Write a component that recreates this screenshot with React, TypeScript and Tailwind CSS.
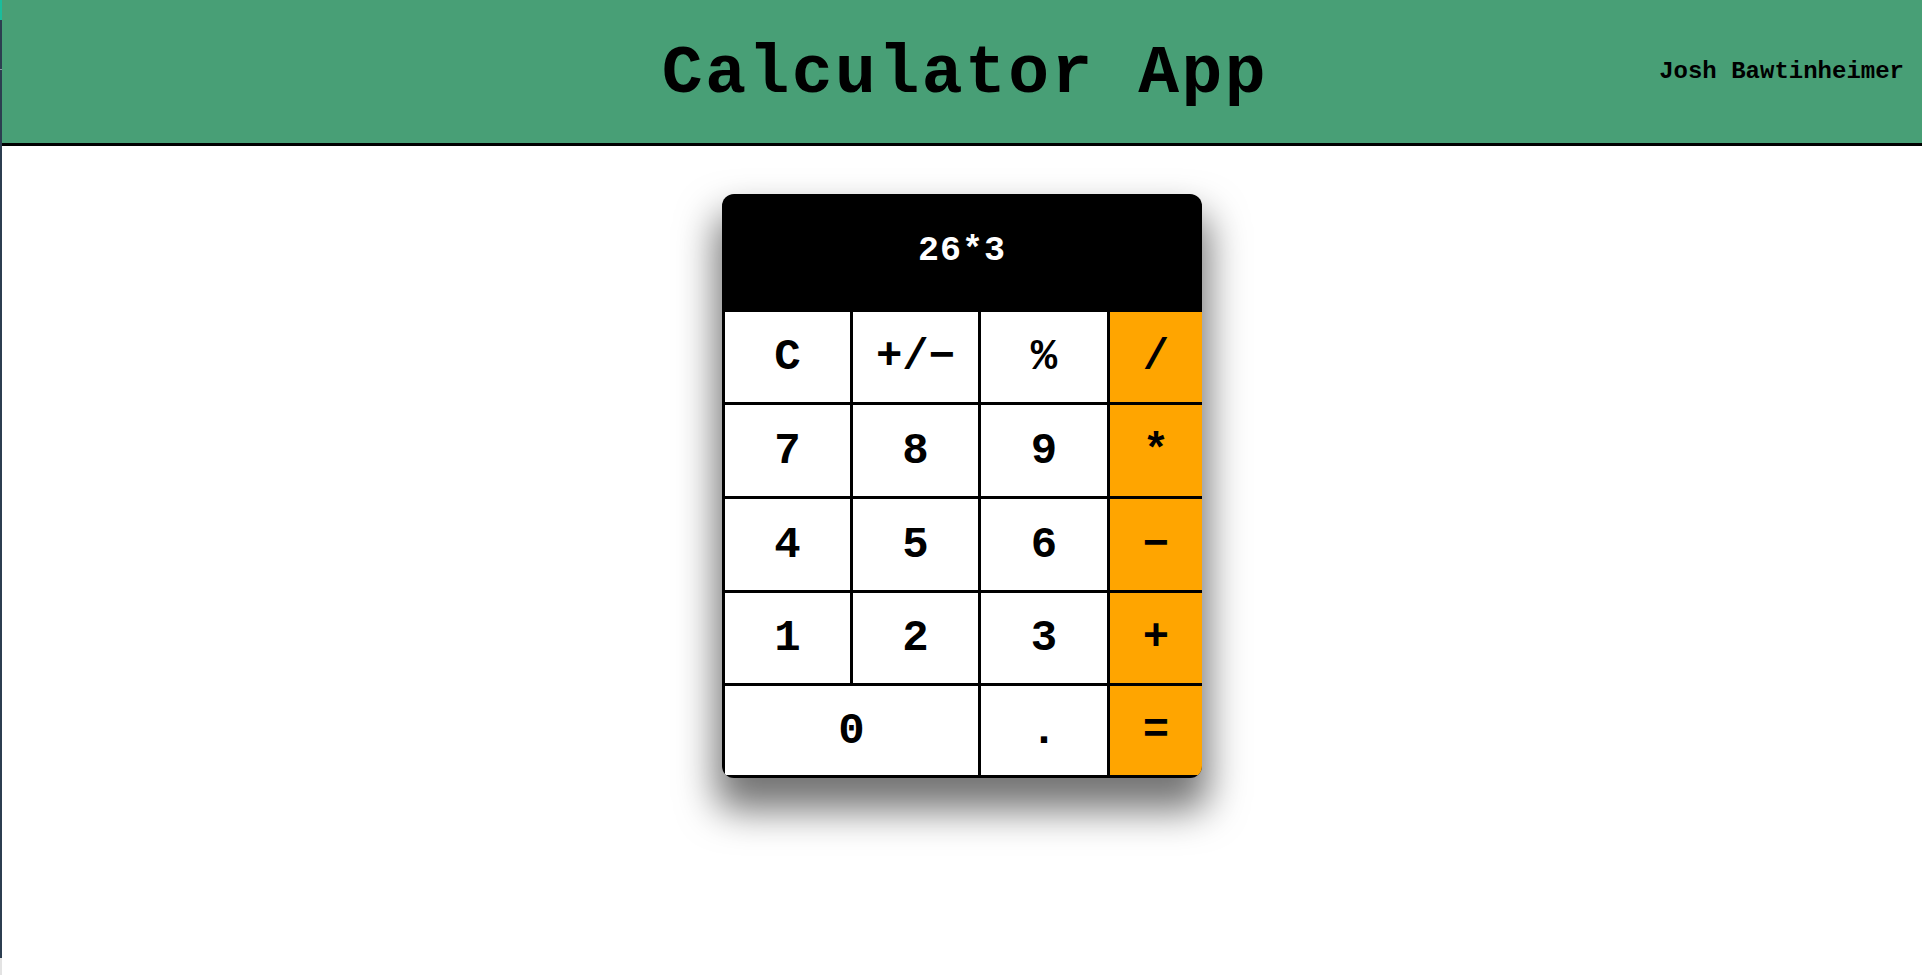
import React from "react";

const rows: { label: string; span?: number; op?: boolean }[][] = [
  [{ label: "C" }, { label: "+/−" }, { label: "%" }, { label: "/", op: true }],
  [{ label: "7" }, { label: "8" }, { label: "9" }, { label: "*", op: true }],
  [{ label: "4" }, { label: "5" }, { label: "6" }, { label: "−", op: true }],
  [{ label: "1" }, { label: "2" }, { label: "3" }, { label: "+", op: true }],
  [{ label: "0", span: 2 }, { label: "." }, { label: "=", op: true }],
];

export default function App() {
  const cells = rows.flat();
  return (
    <div className="flex min-h-screen h-[975px] bg-white" style={{ fontFamily: '"Liberation Mono", "DejaVu Sans Mono", monospace' }}>
      <div className="flex w-[2px] shrink-0 flex-col">
        <div className="h-[20px] bg-[#1abc9c]" />
        <div className="h-[49px] bg-[#2c3e50]" />
        <div className="h-[1px] bg-[#8a96a3]" />
        <div className="flex-1 bg-[#2c3e50]" />
        <div className="h-[17px] bg-[#e3e3e3]" />
      </div>
      <div className="flex flex-1 flex-col">
        <header className="grid h-[146px] grid-cols-[1fr_auto_1fr] items-center border-b-[3px] border-black bg-[#489f76] text-black">
          <div />
          <h1 className="pl-[6px] pt-[4px] text-[68px] font-bold leading-none tracking-[2.5px]">Calculator App</h1>
          <div className="flex justify-end pr-[18px] text-[24px] font-bold">Josh Bawtinheimer</div>
        </header>
        <div className="flex justify-center pt-[48px]">
          <div className="w-[480px] overflow-hidden rounded-[12px] bg-black shadow-[0_26px_38px_6px_rgba(0,0,0,0.55)]">
            <div className="flex h-[118px] items-center justify-center pb-[4px] text-[35px] font-bold tracking-[1px] text-white">
              26*3
            </div>
            <div className="grid grid-cols-[125px_125px_126px_92px] grid-rows-[90px_91px_91px_90px_89px] gap-[3px] pb-[3px] pl-[3px]">
              {cells.map((c, i) => (
                <div
                  key={i}
                  className={
                    "flex items-center justify-center text-[44px] font-bold text-black " +
                    (c.op ? "bg-[#ffa500]" : "bg-white") +
                    (c.span === 2 ? " col-span-2" : "")
                  }
                >
                  {c.label}
                </div>
              ))}
            </div>
          </div>
        </div>
      </div>
    </div>
  );
}
